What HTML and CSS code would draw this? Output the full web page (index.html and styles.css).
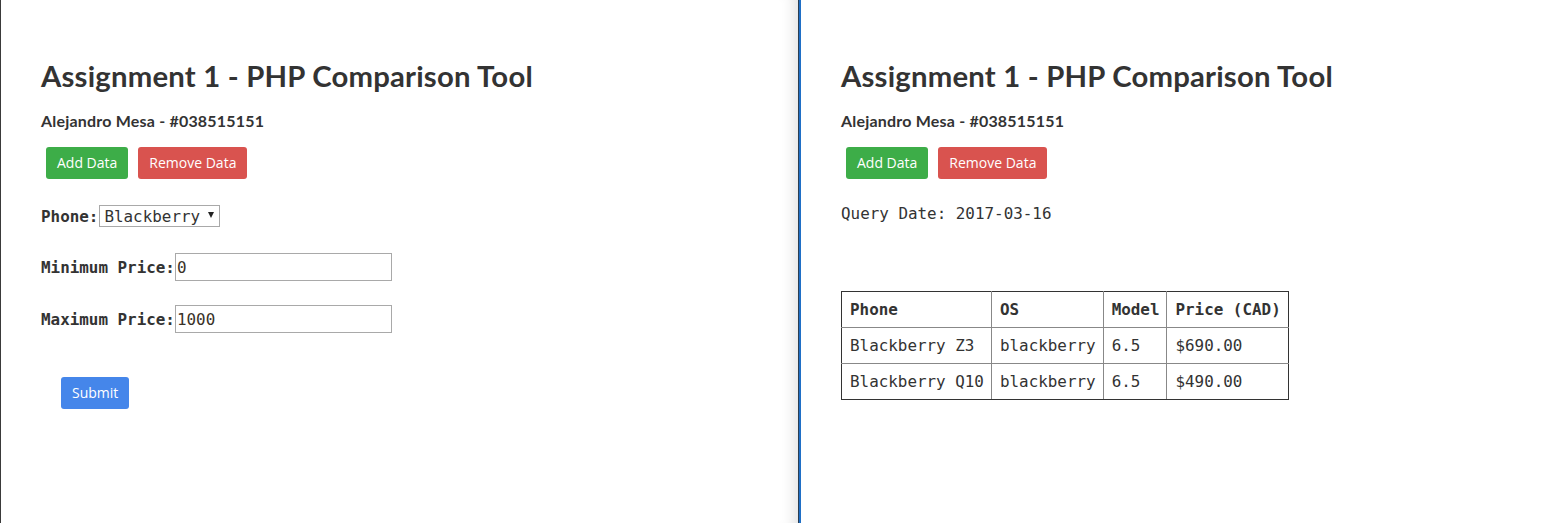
FILE: index.html
```html
<!DOCTYPE html>
<html lang="en">
<head>
<meta charset="utf-8">
<title>Assignment 1 - PHP Comparison Tool</title>
<link rel="stylesheet" href="styles.css">
</head>
<body>
<div class="split">
  <section class="pane pane-left">
    <h1 class="title">Assignment 1 - PHP Comparison Tool</h1>
    <h2 class="author">Alejandro Mesa - #038515151</h2>
    <div class="actions">
      <button class="btn btn-green">Add Data</button>
      <button class="btn btn-red">Remove Data</button>
    </div>
    <form class="query-form">
      <div class="field field-phone">
        <label class="label">Phone:</label>
        <span class="select-wrap">
          <select class="select"><option>Blackberry</option></select>
          <span class="select-arrow"></span>
        </span>
      </div>
      <div class="field field-min">
        <label class="label">Minimum Price:</label>
        <input class="input" type="text" value="0">
      </div>
      <div class="field field-max">
        <label class="label">Maximum Price:</label>
        <input class="input" type="text" value="1000">
      </div>
      <div class="submit-row">
        <button class="btn btn-blue" type="button">Submit</button>
      </div>
    </form>
  </section>
  <div class="divider"></div>
  <section class="pane pane-right">
    <h1 class="title">Assignment 1 - PHP Comparison Tool</h1>
    <h2 class="author">Alejandro Mesa - #038515151</h2>
    <div class="actions">
      <button class="btn btn-green">Add Data</button>
      <button class="btn btn-red">Remove Data</button>
    </div>
    <p class="query-date">Query Date: 2017-03-16</p>
    <table class="results">
      <thead>
        <tr><th>Phone</th><th>OS</th><th>Model</th><th>Price (CAD)</th></tr>
      </thead>
      <tbody>
        <tr><td>Blackberry Z3</td><td>blackberry</td><td>6.5</td><td>$690.00</td></tr>
        <tr><td>Blackberry Q10</td><td>blackberry</td><td>6.5</td><td>$490.00</td></tr>
      </tbody>
    </table>
  </section>
</div>
</body>
</html>
```
FILE: styles.css
```css
html, body {
  margin: 0;
  padding: 0;
  background: #fff;
}
body {
  font-family: "Lato", "Open Sans", sans-serif;
  color: #333;
}
.split {
  display: flex;
  height: 523px;
  overflow: hidden;
}
.pane {
  box-sizing: border-box;
  padding: 60px 40px 0 40px;
}
.pane-left {
  width: 798px;
  flex: 0 0 798px;
  border-left: 1px solid #3a3a3a;
  box-shadow: inset -16px 0 14px -12px rgba(0, 0, 0, 0.12);
}
.divider {
  flex: 0 0 3px;
  background: linear-gradient(to right, #2b3e52 0, #2b3e52 1px, #1f6fc6 1px, #1f6fc6 3px);
}
.pane-right {
  flex: 1;
}
.title {
  margin: 0;
  font-size: 29.3px;
  line-height: 31px;
  font-weight: 700;
  color: #333;
  letter-spacing: 0.2px;
}
.author {
  margin: 21px 0 0 0;
  font-size: 16px;
  line-height: 18px;
  font-weight: 700;
  color: #333;
  letter-spacing: 0.2px;
}
.actions {
  display: flex;
  gap: 10px;
  margin: 17px 0 0 5px;
}
.btn {
  font-family: "Open Sans", "Lato", sans-serif;
  font-size: 14px;
  line-height: 20px;
  height: 32px;
  padding: 5px 11px;
  border: 0;
  border-radius: 3px;
  color: #fff;
  cursor: pointer;
}
.btn-green { background: #3dad48; }
.btn-red { background: #d9534f; }
.btn-blue { background: #4586ea; }
.query-form {
  margin: 0;
}
.field {
  display: flex;
  align-items: center;
  font-family: "DejaVu Sans Mono", "Liberation Mono", monospace;
  font-size: 15.9px;
}
.label {
  font-weight: 700;
  color: #333;
}
.field-phone { margin-top: 26px; height: 22px; }
.field-min { margin-top: 26px; height: 28px; }
.field-max { margin-top: 24px; height: 28px; }
.select-wrap {
  position: relative;
  display: inline-block;
  margin-left: 1px;
}
.select {
  appearance: none;
  -webkit-appearance: none;
  box-sizing: border-box;
  width: 121px;
  height: 22px;
  padding: 0 0 0 4px;
  border: 1px solid #a9a9a9;
  border-radius: 0;
  background: #fff;
  font-family: "DejaVu Sans Mono", "Liberation Mono", monospace;
  font-size: 15.9px;
  color: #333;
}
.select-arrow {
  position: absolute;
  right: 6px;
  top: 7px;
  width: 0;
  height: 0;
  border-left: 3.5px solid transparent;
  border-right: 3.5px solid transparent;
  border-top: 6px solid #222;
}
.input {
  box-sizing: border-box;
  width: 217px;
  height: 28px;
  padding: 0 1px;
  border: 1px solid #a9a9a9;
  border-radius: 0;
  font-family: "DejaVu Sans Mono", "Liberation Mono", monospace;
  font-size: 15.9px;
  color: #3a3228;
}
.submit-row {
  margin: 44px 0 0 20px;
}
.query-date {
  margin: 25px 0 0 0;
  font-family: "DejaVu Sans Mono", "Liberation Mono", monospace;
  font-size: 15.9px;
  line-height: 20px;
  color: #333;
}
.results {
  margin-top: 67px;
  border-collapse: collapse;
  border: 1px solid #333;
  font-family: "DejaVu Sans Mono", "Liberation Mono", monospace;
  font-size: 15.9px;
  color: #333;
}
.results th, .results td {
  border: 1px solid #888;
  padding: 7px 7px 8px 8px;
  text-align: left;
  white-space: nowrap;
  height: 20px;
}
.results th {
  font-weight: 700;
}
.results tr > :first-child { border-left-color: #333; }
.results tr > :last-child { border-right-color: #333; }
.results thead th { border-top-color: #333; }
.results tbody tr:last-child td { border-bottom-color: #333; }
```
